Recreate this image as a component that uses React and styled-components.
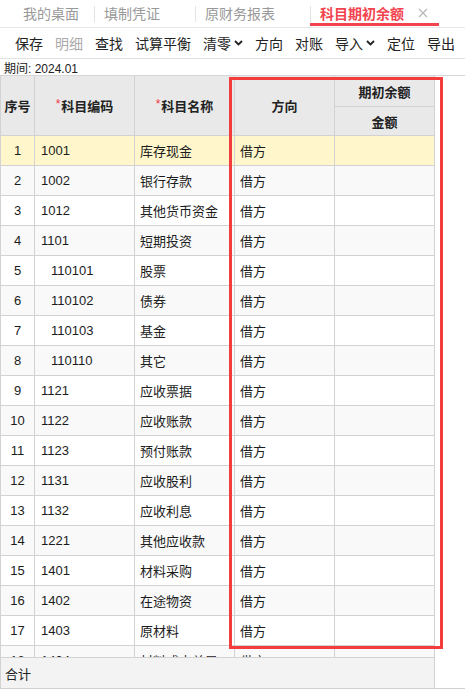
import React from "react";
import styled, { createGlobalStyle } from "styled-components";

const GlobalStyle = createGlobalStyle`
  html, body { margin: 0; padding: 0; background: #fff; }
  body { font-family: "Liberation Sans", "Noto Sans CJK SC", sans-serif; color: #222; }
  * { box-sizing: border-box; }
`;

const Page = styled.div`
  position: relative;
  width: 465px;
  height: 692px;
  display: flex;
  flex-direction: column;
  overflow: hidden;
`;

const TabBar = styled.div`
  height: 28px;
  display: flex;
  align-items: stretch;
  padding-left: 13px;
  border-bottom: 1px solid #e6e6e6;
`;

const Tab = styled.div`
  position: relative;
  display: flex;
  align-items: center;
  padding: 0 ${(p) => (p.$closable ? 11 : 15)}px 1px 10px;
  font-size: 14px;
  color: ${(p) => (p.$active ? "#f2434e" : "#999")};
  font-weight: ${(p) => (p.$active ? 700 : 400)};
  &::before {
    content: "";
    display: ${(p) => (p.$first ? "none" : "block")};
    position: absolute;
    left: 0;
    top: 6px;
    height: 16px;
    width: 1px;
    background: #e4e4e4;
  }
  &::after {
    content: "";
    display: ${(p) => (p.$active ? "block" : "none")};
    position: absolute;
    left: 0;
    right: 0;
    bottom: 1px;
    height: 3px;
    background: #f2434e;
  }
`;

const Close = styled.span`
  display: inline-flex;
  margin-left: 14px;
  width: 10px;
  visibility: ${(p) => (p.$show ? "visible" : "hidden")};
`;

const Toolbar = styled.div`
  height: 31px;
  display: flex;
  align-items: center;
  gap: 12px;
  padding-left: 15px;
  border-bottom: 1px solid #e2e2e2;
  white-space: nowrap;
`;

const ToolButton = styled.span`
  display: inline-flex;
  align-items: center;
  gap: 3px;
  font-size: 14px;
  color: ${(p) => (p.$disabled ? "#aaa" : "#222")};
`;

const PeriodBar = styled.div`
  height: 17px;
  display: flex;
  align-items: center;
  padding-left: 4px;
  font-size: 12px;
  color: #222;
  border-bottom: 1px solid #d6d6d6;
`;

const GridWrap = styled.div`
  flex: 1;
  overflow: hidden;
  min-height: 0;
`;

const Grid = styled.div`
  display: grid;
  width: 435px;
  grid-template-columns: 34px 100px 100px 100px 100px;
  grid-auto-rows: 30px;
  border-left: 1px solid #d2d2d2;
  font-size: 13px;
`;

const HeadCell = styled.div`
  grid-row: ${(p) => p.$row || "auto"};
  grid-column: ${(p) => p.$col || "auto"};
  height: ${(p) => p.$h}px;
  display: flex;
  align-items: center;
  justify-content: center;
  background: #e9e9e9;
  font-weight: 700;
  color: #222;
  border-right: 1px solid #d2d2d2;
  border-bottom: 1px solid #d2d2d2;
`;

const Star = styled.span`
  color: #f5333f;
  font-weight: 400;
  font-size: 12px;
  margin-right: 1px;
  position: relative;
  top: -2px;
`;

const Cell = styled.div`
  display: flex;
  align-items: center;
  justify-content: ${(p) => (p.$center ? "center" : "flex-start")};
  padding-left: ${(p) => p.$pad || 0}px;
  background: ${(p) => (p.$selected ? "#fff7cb" : p.$alt ? "#f9f9f9" : "#fff")};
  border-right: 1px solid #d2d2d2;
  border-bottom: 1px solid #d2d2d2;
  color: #1c1c1c;
  white-space: nowrap;
  overflow: hidden;
`;

const SummaryBar = styled.div`
  height: 31px;
  width: 435px;
  display: flex;
  align-items: center;
  padding-left: 4px;
  font-size: 13px;
  background: #f3f3f3;
  border-top: 1px solid #d2d2d2;
  border-left: 1px solid #d2d2d2;
  border-right: 1px solid #d2d2d2;
  color: #222;
`;

const BottomEdge = styled.div`
  height: 4px;
  border-top: 1px solid #cfcfcf;
  background: #fff;
`;

const Highlight = styled.div`
  position: absolute;
  left: 229px;
  top: 77px;
  width: 214px;
  height: 572px;
  border: 3px solid #f23d3f;
  pointer-events: none;
`;

const Chevron = () => (
  <svg width="9" height="6" viewBox="0 0 9 6">
    <polyline points="1,1 4.5,4.5 8,1" fill="none" stroke="#222" strokeWidth="1.8" />
  </svg>
);

const CloseIcon = () => (
  <svg width="10" height="10" viewBox="0 0 10 10">
    <path d="M1 1 L9 9 M9 1 L1 9" stroke="#b8b8b8" strokeWidth="1.3" />
  </svg>
);

const tabs = [
  { label: "我的桌面" },
  { label: "填制凭证", closable: true },
  { label: "原财务报表", closable: true },
  { label: "科目期初余额", closable: true, active: true },
];

const tools = [
  { label: "保存" },
  { label: "明细", disabled: true },
  { label: "查找" },
  { label: "试算平衡" },
  { label: "清零", menu: true },
  { label: "方向" },
  { label: "对账" },
  { label: "导入", menu: true },
  { label: "定位" },
  { label: "导出" },
];

const accounts = [
  ["1001", "库存现金"],
  ["1002", "银行存款"],
  ["1012", "其他货币资金"],
  ["1101", "短期投资"],
  ["110101", "股票", 1],
  ["110102", "债券", 1],
  ["110103", "基金", 1],
  ["110110", "其它", 1],
  ["1121", "应收票据"],
  ["1122", "应收账款"],
  ["1123", "预付账款"],
  ["1131", "应收股利"],
  ["1132", "应收利息"],
  ["1221", "其他应收款"],
  ["1401", "材料采购"],
  ["1402", "在途物资"],
  ["1403", "原材料"],
  ["1404", "材料成本差异"],
];

export default function App() {
  return (
    <Page>
      <GlobalStyle />
      <TabBar>
        {tabs.map((t, i) => (
          <Tab key={t.label} $first={i === 0} $active={t.active} $closable={t.closable}>
            {t.label}
            {t.closable && (
              <Close $show={t.active}>
                <CloseIcon />
              </Close>
            )}
          </Tab>
        ))}
      </TabBar>
      <Toolbar>
        {tools.map((t) => (
          <ToolButton key={t.label} $disabled={t.disabled}>
            {t.label}
            {t.menu && <Chevron />}
          </ToolButton>
        ))}
      </Toolbar>
      <PeriodBar>期间: 2024.01</PeriodBar>
      <GridWrap>
        <Grid>
          <HeadCell $row="1 / span 2" $col="1" $h={60}>序号</HeadCell>
          <HeadCell $row="1 / span 2" $col="2" $h={60}>
            <Star>*</Star>科目编码
          </HeadCell>
          <HeadCell $row="1 / span 2" $col="3" $h={60}>
            <Star>*</Star>科目名称
          </HeadCell>
          <HeadCell $row="1 / span 2" $col="4" $h={60}>方向</HeadCell>
          <HeadCell $row="1" $col="5" $h={31}>期初余额</HeadCell>
          <HeadCell $row="2" $col="5" $h={29} style={{ marginTop: 1 }}>金额</HeadCell>
          {accounts.map(([code, name, sub], i) => {
            const rowProps = { $selected: i === 0, $alt: i % 2 === 1 };
            return (
              <React.Fragment key={code}>
                <Cell {...rowProps} $center>{i + 1}</Cell>
                <Cell {...rowProps} $pad={sub ? 16 : 6}>{code}</Cell>
                <Cell {...rowProps} $pad={5}>{name}</Cell>
                <Cell {...rowProps} $pad={5}>借方</Cell>
                <Cell {...rowProps} />
              </React.Fragment>
            );
          })}
        </Grid>
      </GridWrap>
      <SummaryBar>合计</SummaryBar>
      <BottomEdge />
      <Highlight />
    </Page>
  );
}
